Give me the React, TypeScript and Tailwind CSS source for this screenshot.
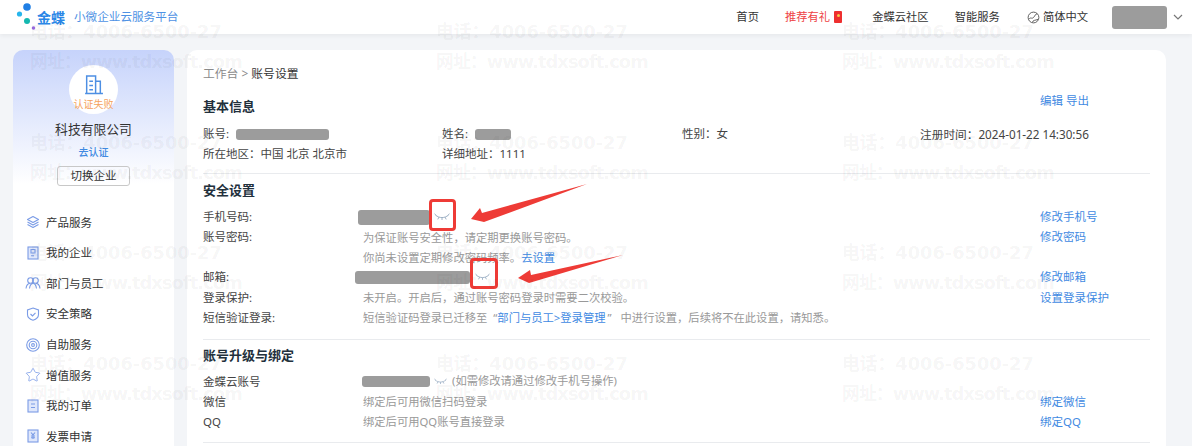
import React from "react";
import { Star } from "lucide-react";

const Eye = ({ className = "" }: { className?: string }) => (
  <svg viewBox="0 0 16 9" className={className} fill="none" stroke="#9fb2c6" strokeWidth="1">
    <path d="M1.5 2c3.5 3.4 9.5 3.4 13 0M0.5 0.8 2.4 2.6M15.5 0.8l-1.9 1.8M5 4 3.8 6.4M11 4l1.2 2.4M8 4.6v2.4" />
  </svg>
);

const Blur = ({ className = "" }: { className?: string }) => (
  <span className={`inline-block shrink-0 rounded-[3px] bg-[#9c9c9c] ${className}`} />
);

const A = ({ children }: { children: React.ReactNode }) => <span className="text-[#3f8ae2]">{children}</span>;

const Row = ({ label, action, children }: { label: string; action?: string; children?: React.ReactNode }) => (
  <div className="grid grid-cols-[160px_677px_110px] text-[11.5px] leading-[20.4px] text-[#444]">
    <div>{label}</div>
    <div className="text-[11.3px] text-[#999]">{children}</div>
    <div><A>{action}</A></div>
  </div>
);

const icon = "h-[14px] w-[14px] text-[#7b9ce6]";
const SmallRect = ({ inner }: { inner: React.ReactNode }) => (
  <svg viewBox="0 0 14 14" className={icon} fill="none" stroke="currentColor" strokeWidth="1.1">
    <rect x="2" y="1" width="10" height="12" fill="#dfe7fb" />
    {inner}
  </svg>
);

const menu: [string, React.ReactNode][] = [
  ["产品服务", (
    <svg viewBox="0 0 14 14" className={icon} fill="none" stroke="currentColor" strokeWidth="1.1" strokeLinejoin="round">
      <path d="M7 1.5 12.5 4.5 7 7.5 1.5 4.5ZM1.5 7 7 10l5.500-3M1.500 9.500 7 12.500l5.500-3" />
    </svg>
  )],
  ["我的企业", <SmallRect inner={<path d="M5 3.500h4v3.500H5zM5 9.800h3" />} />],
  ["部门与员工", (
    <svg viewBox="0 0 16 14" className="ml-[-1px] mr-[-1px] h-[14px] w-[16px] text-[#7b9ce6]" fill="none" stroke="currentColor" strokeWidth="1.1">
      <circle cx="5.500" cy="4.500" r="2.800" />
      <circle cx="10.500" cy="4.500" r="2.800" />
      <path d="M1 12.500c.4-3 2-5 4-5M15 12.500c-.4-3-2-5-4-5M4.500 12.500c.4-3 1.600-5 3.500-5s3.100 2 3.500 5" />
    </svg>
  )],
  ["安全策略", (
    <svg viewBox="0 0 14 14" className={icon} fill="none" stroke="currentColor" strokeWidth="1.1">
      <path d="M7 1 12.500 3v4.500c0 3-2.500 4.800-5.500 5.700C4 12.300 1.500 10.500 1.500 7.500V3Z" />
      <path d="m4.500 7 2 2 3-3.200" />
    </svg>
  )],
  ["自助服务", (
    <svg viewBox="0 0 14 14" className={icon} fill="none" stroke="currentColor" strokeWidth="1.1">
      <circle cx="7" cy="7" r="6.300" />
      <circle cx="7" cy="7" r="3.800" />
      <circle cx="7" cy="7" r="1.400" />
    </svg>
  )],
  ["增值服务", <Star className="ml-[-1px] mr-[-1px] h-[16px] w-[16px] text-[#7b9ce6]" strokeWidth={1.2} />],
  ["我的订单", <SmallRect inner={<path d="M5 5h4M5 8.500h4" />} />],
  ["发票申请", <SmallRect inner={<path d="m5 3.500 2 2.400 2-2.400M7 5.900V10M5 7h4M5 8.800h4" />} />],
];

export default function App() {
  return (
    <div className="relative h-[446px] w-[1192px] overflow-hidden bg-[#f3f5f8] text-[11.5px] text-[#333] [font-family:'Noto_Sans','Noto_Sans_CJK_SC',sans-serif]">
      <header className="flex h-[34px] items-center bg-white shadow-[0_2px_4px_rgba(0,0,0,0.05)]">
        <svg viewBox="0 0 24 30" className="ml-[15px] h-[30px] w-[24px] shrink-0">
          <circle cx="12" cy="5" r="3.800" fill="#1f7fe5" />
          <circle cx="4.500" cy="12" r="2.600" fill="#27b5ec" />
          <circle cx="12" cy="19" r="3" fill="#14b8b0" />
          <circle cx="18.500" cy="26" r="1.800" fill="#9a6be0" />
        </svg>
        <span className="ml-[-2px] text-[14px] font-bold text-[#2a86e6]">金蝶</span>
        <span className="ml-[9px] text-[11.6px] text-[#4f92e4]">小微企业云服务平台</span>
        <nav className="ml-[558px] flex shrink-0 items-center text-[11.3px] text-[#333]">
          <span>首页</span>
          <span className="ml-[26px] text-[#ee3f45]">推荐有礼</span>
          <span className="ml-[4px] flex h-[12px] w-[8px] items-start justify-center rounded-[1px] bg-[#ee2f2f]">
            <span className="mt-[3px] h-[3px] w-[3px] rounded-full bg-[#f7c948]" />
          </span>
          <span className="ml-[30px]">金蝶云社区</span>
          <span className="ml-[26px]">智能服务</span>
          <svg viewBox="0 0 14 14" className="ml-[27px] h-[13px] w-[13px]" fill="none" stroke="#555" strokeWidth="1">
            <circle cx="7" cy="7" r="5.800" />
            <path d="M2 9c2-3 3 0 5-2s2-4 4-4M6 12c0-2 3-2 6-3" />
          </svg>
          <span className="ml-[3px]">简体中文</span>
          <Blur className="ml-[24px] h-[23px] w-[55px]" />
          <svg viewBox="0 0 10 6" width="10" height="6" className="ml-[6px] shrink-0" fill="none" stroke="#777" strokeWidth="1.2">
            <path d="M1 1l4 4 4-4" />
          </svg>
        </nav>
      </header>

      <div className="mt-[16px] flex gap-[13px] px-[13px]">
        <aside className="h-[420px] w-[161px] shrink-0 rounded-t-[10px] bg-[linear-gradient(180deg,#c6d3fb_0%,#ffffff_32%)]">
          <div className="flex flex-col items-center pt-[15px]">
            <div className="flex h-[49px] w-[49px] flex-col items-center rounded-full bg-white pt-[9px]">
              <svg viewBox="0 0 20 20" className="h-[21px] w-[21px]" fill="none" stroke="#4d8fe3" strokeWidth="1.400">
                <path d="M2 18.500h17M3.500 18V2h8.500v16M12 7h4.500v11M6 7h3.500M6 11h3.500M6 15h3.500" />
              </svg>
              <span className="mt-[2px] text-[10px] leading-[14px] text-[#f5a25d]">认证失败</span>
            </div>
            <div className="mt-[6px] text-[12.8px] leading-[18px] text-[#333]">科技有限公司</div>
            <div className="mt-[5px] text-[10px] font-medium leading-[18px] text-[#3f8ae2]">去认证</div>
            <div className="mt-[5px] flex h-[20px] w-[73px] items-center justify-center rounded-[3px] border border-[#c8c8c8] text-[11.5px] text-[#333]">切换企业</div>
          </div>
          <ul className="mt-[21px]">
            {menu.map(([label, ic]) => (
              <li key={label} className="flex h-[30.6px] items-center gap-[6px] pl-[13px] text-[11.5px] text-[#333]">
                {ic}
                <span>{label}</span>
              </li>
            ))}
          </ul>
        </aside>

        <main className="h-[420px] w-[979px] shrink-0 rounded-t-[10px] bg-white px-[16px] pt-[14px]">
          <div className="text-[11.8px] leading-[18px]"><span className="text-[#8a8a8a]">工作台 &gt; </span>账号设置</div>

          <div className="mt-[14px] grid grid-cols-[837px_110px] items-start">
            <div className="text-[13px] font-bold leading-[20px] text-[#22303c]">基本信息</div>
            <div className="mt-[-5px] leading-[20px]"><A>编辑 导出</A></div>
          </div>
          <div className="mt-[8px] grid grid-cols-[239px_240px_238px_auto] leading-[20px] text-[#444]">
            <div className="flex items-center">账号:<Blur className="ml-[7px] h-[11px] w-[93px]" /></div>
            <div className="flex items-center">姓名:<Blur className="ml-[7px] h-[11px] w-[36px]" /></div>
            <div>性别：女</div>
            <div className="text-[11.7px]">注册时间：2024-01-22 14:30:56</div>
            <div>所在地区：中国 北京 北京市</div>
            <div>详细地址：1111</div>
          </div>
          <hr className="mt-[9px] border-[#e9ebee]" />

          <div className="mt-[6px] text-[13px] font-bold leading-[20px] text-[#22303c]">安全设置</div>
          <div className="mt-[7px]">
            <Row label="手机号码:" action="修改手机号">
              <span className="flex h-[20px] items-center">
                <Blur className="ml-[-5px] h-[15px] w-[72px]" />
                <Eye className="ml-[4px] h-[9px] w-[16px]" />
              </span>
            </Row>
            <Row label="账号密码:" action="修改密码">
              <div className="pt-[1px]">为保证账号安全性，请定期更换账号密码。</div>
              <div className="leading-[18.6px]">你尚未设置定期修改密码频率。<A>去设置</A></div>
            </Row>
            <Row label="邮箱:" action="修改邮箱">
              <span className="flex h-[20px] items-center">
                <Blur className="ml-[-8px] h-[13px] w-[115px]" />
                <Eye className="ml-[5px] h-[9px] w-[15px]" />
              </span>
            </Row>
            <Row label="登录保护:" action="设置登录保护">未开启。开启后，通过账号密码登录时需要二次校验。</Row>
            <Row label="短信验证登录:">
              短信验证码登录已迁移至<span className="ml-[6px]">“</span><A>部门与员工&gt;登录管理</A><span className="ml-[2px] mr-[9px]">”</span>中进行设置，后续将不在此设置，请知悉。
            </Row>
          </div>
          <hr className="mt-[10px] border-[#e9ebee]" />

          <div className="mt-[5px] text-[13px] font-bold leading-[20px] text-[#22303c]">账号升级与绑定</div>
          <div className="mt-[7px]">
            <Row label="金蝶云账号">
              <span className="flex h-[20px] items-center">
                <Blur className="ml-[-1px] h-[11px] w-[68px]" />
                <Eye className="ml-[4px] h-[8px] w-[13px]" />
                <span className="ml-[5px]">(如需修改请通过修改手机号操作)</span>
              </span>
            </Row>
            <Row label="微信" action="绑定微信">绑定后可用微信扫码登录</Row>
            <Row label="QQ" action="绑定QQ">绑定后可用QQ账号直接登录</Row>
          </div>
          <hr className="mt-[9px] border-[#e9ebee]" />
        </main>
      </div>

      {/* screenshot annotations */}
      <svg className="pointer-events-none absolute left-0 top-0" width="1192" height="446" viewBox="0 0 1192 446">
        <rect x="430.500" y="200.500" width="24" height="29" rx="2.500" fill="none" stroke="#ee3b36" strokeWidth="3" />
        <rect x="471.500" y="259.500" width="25" height="28" rx="2.500" fill="none" stroke="#ee3b36" strokeWidth="3" />
        <polygon points="587,184 484,222 471,219 480,208 482,213" fill="#ee3b36" />
        <polygon points="623,255 529,283 518,278 530,270 531,275" fill="#ee3b36" />
      </svg>

      {/* watermark */}
      <div className="pointer-events-none absolute left-[30px] top-[17px] grid grid-cols-[repeat(3,406px)] auto-rows-[110.5px] text-[17.8px] font-bold leading-[30px] text-black/[0.05] [font-family:'DejaVu_Sans','Noto_Sans_CJK_SC',sans-serif]">
        {Array.from({ length: 12 }).map((_, i) => (
          <div key={i} className="whitespace-nowrap">
            <div>电话：4006-6500-27</div>
            <div className="tracking-[-0.9px]">网址：www.tdxsoft.com</div>
          </div>
        ))}
      </div>
    </div>
  );
}
